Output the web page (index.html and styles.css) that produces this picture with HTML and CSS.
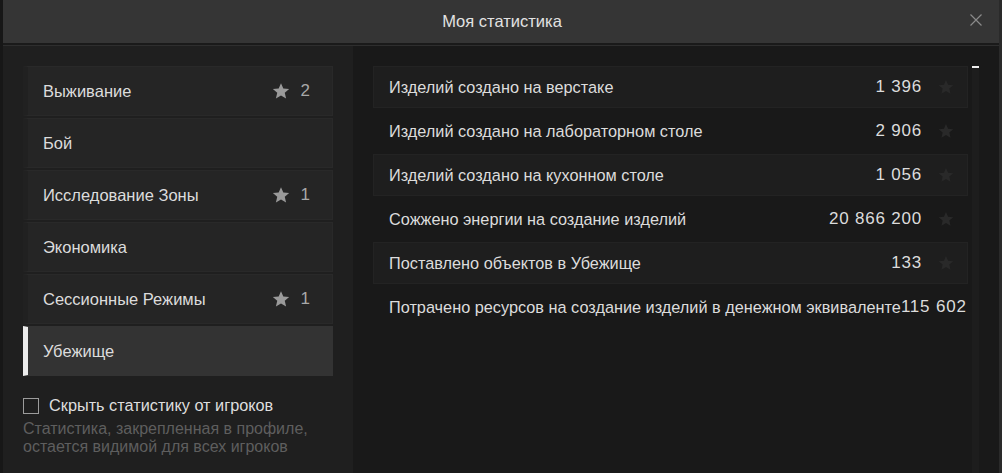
FILE: index.html
```html
<!DOCTYPE html>
<html lang="ru">
<head>
    <meta charset="UTF-8">
    <title>Моя статистика</title>
    <link rel="stylesheet" href="styles.css">
</head>
<body>

<div class="window">
    <div class="header">
        <div class="title">Моя статистика</div>
        <svg class="close" width="12" height="12" viewBox="0 0 12 12">
            <path d="M0.5 0.5 L11.5 11.5 M11.5 0.5 L0.5 11.5" stroke="#8a8a8a" stroke-width="1.2" fill="none"/>
        </svg>
    </div>
    <div class="divider"></div>

    <div class="content">
        <div class="sidebar">
            <div class="categories">
                <div class="cat">
                    <span class="cat-name">Выживание</span>
                    <svg class="star" viewBox="0 0 24 24"><path d="M12 1.5l3.1 7.2 7.8.6-5.9 5.1 1.8 7.6L12 18l-6.8 4 1.8-7.6-5.9-5.1 7.8-.6z"/></svg>
                    <span class="cat-count">2</span>
                </div>
                <div class="cat">
                    <span class="cat-name">Бой</span>
                </div>
                <div class="cat">
                    <span class="cat-name">Исследование Зоны</span>
                    <svg class="star" viewBox="0 0 24 24"><path d="M12 1.5l3.1 7.2 7.8.6-5.9 5.1 1.8 7.6L12 18l-6.8 4 1.8-7.6-5.9-5.1 7.8-.6z"/></svg>
                    <span class="cat-count">1</span>
                </div>
                <div class="cat">
                    <span class="cat-name">Экономика</span>
                </div>
                <div class="cat">
                    <span class="cat-name">Сессионные Режимы</span>
                    <svg class="star" viewBox="0 0 24 24"><path d="M12 1.5l3.1 7.2 7.8.6-5.9 5.1 1.8 7.6L12 18l-6.8 4 1.8-7.6-5.9-5.1 7.8-.6z"/></svg>
                    <span class="cat-count">1</span>
                </div>
                <div class="cat active">
                    <span class="cat-name">Убежище</span>
                </div>
            </div>

            <label class="hide-stats">
                <span class="checkbox"></span>
                <span>Скрыть статистику от игроков</span>
            </label>
            <div class="hint">Статистика, закрепленная в профиле, остается видимой для всех игроков</div>
        </div>

        <div class="stats">
            <div class="rows">
                <div class="row shaded">
                    <span class="label">Изделий создано на верстаке</span>
                    <span class="value">1 396</span>
                    <svg class="pin" viewBox="0 0 24 24"><path d="M12 1.5l3.1 7.2 7.8.6-5.9 5.1 1.8 7.6L12 18l-6.8 4 1.8-7.6-5.9-5.1 7.8-.6z"/></svg>
                </div>
                <div class="row">
                    <span class="label">Изделий создано на лабораторном столе</span>
                    <span class="value">2 906</span>
                    <svg class="pin" viewBox="0 0 24 24"><path d="M12 1.5l3.1 7.2 7.8.6-5.9 5.1 1.8 7.6L12 18l-6.8 4 1.8-7.6-5.9-5.1 7.8-.6z"/></svg>
                </div>
                <div class="row shaded">
                    <span class="label">Изделий создано на кухонном столе</span>
                    <span class="value">1 056</span>
                    <svg class="pin" viewBox="0 0 24 24"><path d="M12 1.5l3.1 7.2 7.8.6-5.9 5.1 1.8 7.6L12 18l-6.8 4 1.8-7.6-5.9-5.1 7.8-.6z"/></svg>
                </div>
                <div class="row">
                    <span class="label">Сожжено энергии на создание изделий</span>
                    <span class="value">20 866 200</span>
                    <svg class="pin" viewBox="0 0 24 24"><path d="M12 1.5l3.1 7.2 7.8.6-5.9 5.1 1.8 7.6L12 18l-6.8 4 1.8-7.6-5.9-5.1 7.8-.6z"/></svg>
                </div>
                <div class="row shaded">
                    <span class="label">Поставлено объектов в Убежище</span>
                    <span class="value">133</span>
                    <svg class="pin" viewBox="0 0 24 24"><path d="M12 1.5l3.1 7.2 7.8.6-5.9 5.1 1.8 7.6L12 18l-6.8 4 1.8-7.6-5.9-5.1 7.8-.6z"/></svg>
                </div>
                <div class="row">
                    <span class="label">Потрачено ресурсов на создание изделий в денежном эквиваленте</span>
                    <span class="value">115 602</span>
                    <svg class="pin" viewBox="0 0 24 24"><path d="M12 1.5l3.1 7.2 7.8.6-5.9 5.1 1.8 7.6L12 18l-6.8 4 1.8-7.6-5.9-5.1 7.8-.6z"/></svg>
                </div>
            </div>
            <div class="track">
                <div class="thumb"></div>
            </div>
        </div>
    </div>
</div>

</body>
</html>
```

FILE: styles.css
```css
body {
    margin: 0;
    background-color: #191919;
    font-family: "Liberation Sans", Arial, sans-serif;
    color: #dcdcdc;
}

.window {
    width: 1002px;
    height: 473px;
    box-sizing: border-box;
    border-left: 3px solid #171717;
    border-right: 3px solid #2a2a2a;
    display: flex;
    flex-direction: column;
    overflow: hidden;
}

.header {
    height: 43px;
    flex: none;
    background-color: #353535;
    display: flex;
    align-items: center;
    justify-content: center;
    position: relative;
}

.title {
    font-size: 16.5px;
    color: #e2e2e2;
    margin-left: 2px;
}

.close {
    position: absolute;
    right: 17px;
    top: 14px;
}

.divider {
    height: 2px;
    flex: none;
    background-color: #1a1a1a;
    border-bottom: 1px solid #2e2e2e;
}

.content {
    flex: 1;
    display: flex;
    min-height: 0;
}

.sidebar {
    width: 350px;
    flex: none;
    box-sizing: border-box;
    padding: 20px 20px 0 20px;
    background-color: #1f1f1f;
}

.categories {
    display: flex;
    flex-direction: column;
    gap: 2px;
}

.cat {
    height: 50px;
    box-sizing: border-box;
    display: flex;
    align-items: center;
    padding: 0 22px 0 15px;
    background-color: #252525;
    border: 1px solid #292929;
    border-left: 5px solid #212121;
    font-size: 16.5px;
    color: #dcdcdc;
}

.cat.active {
    background-color: #333333;
    border-color: #333333;
    border-left-color: #ececec;
}

.cat-name {
    flex: 1;
}

.star {
    width: 18px;
    height: 18px;
    fill: #9a9a9a;
    margin-right: 11px;
}

.cat-count {
    color: #a8a8a8;
    font-size: 17px;
}

.hide-stats {
    display: flex;
    align-items: center;
    gap: 10px;
    margin-top: 20px;
    font-size: 16.3px;
    color: #dedede;
}

.checkbox {
    width: 16px;
    height: 16px;
    box-sizing: border-box;
    border: 1.5px solid #9c9c9c;
}

.hint {
    margin-top: 5px;
    font-size: 16px;
    line-height: 18px;
    color: #5e5e5e;
    width: 310px;
}

.stats {
    flex: 1;
    display: flex;
    gap: 4px;
    padding: 20px 0 0 20px;
}

.rows {
    width: 595px;
    display: flex;
    flex-direction: column;
    gap: 2px;
}

.row {
    height: 42px;
    box-sizing: border-box;
    display: flex;
    align-items: center;
    padding: 0 13px 0 15px;
    border: 1px solid transparent;
    font-size: 16.3px;
    color: #dcdcdc;
    overflow: hidden;
}

.row.shaded {
    background-color: #1e1e1e;
    border-color: #232323;
}

.label {
    flex: none;
    white-space: nowrap;
}

.value {
    margin-left: auto;
    font-size: 17px;
    letter-spacing: 0.8px;
    white-space: nowrap;
}

.pin {
    flex: none;
    width: 16px;
    height: 16px;
    fill: #292929;
    margin-left: 16px;
}

.track {
    width: 7px;
    background-color: #1d1d1d;
}

.thumb {
    height: 2px;
    background-color: #eeeeee;
}
```
